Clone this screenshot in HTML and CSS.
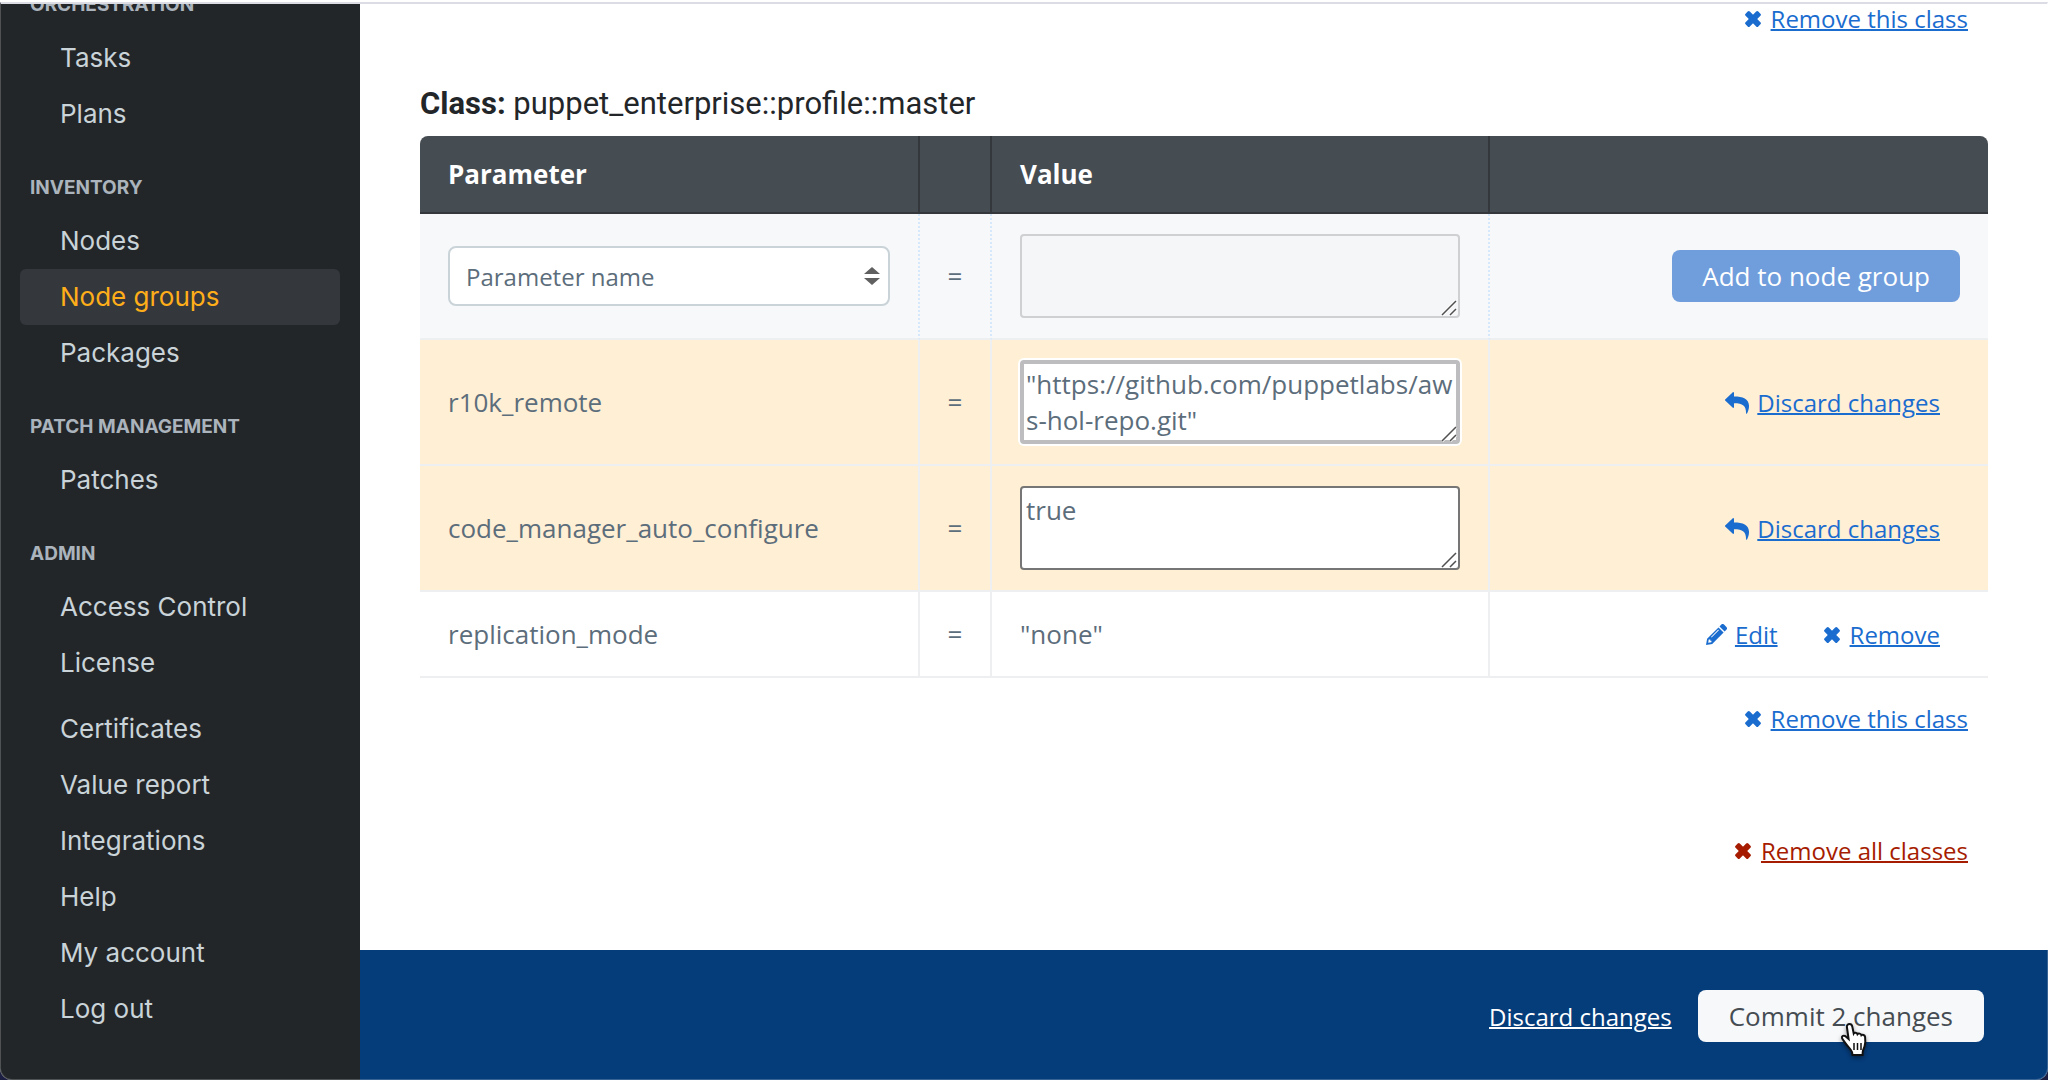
FILE: index.html
```html
<!DOCTYPE html>
<html lang="en">
<head>
<meta charset="utf-8">
<title>Node groups</title>
<link rel="stylesheet" href="styles.css">
</head>
<body>
<svg class="sprite" aria-hidden="true">
  <symbol id="i-times" viewBox="0 0 16 16"><rect x="-1" y="5" width="18" height="6" rx="1.500" transform="rotate(45 8 8)"/><rect x="-1" y="5" width="18" height="6" rx="1.500" transform="rotate(-45 8 8)"/></symbol>
  <symbol id="i-reply" viewBox="0 0 24 22"><path d="M.4 7.200 7.600.4C8.200-.2 9 .2 9 1v3.600c9 0 14.600 2.400 15 9 .1 3-.9 5.800-2 7.800-.3.5-.9.4-.9-.2C21 13.600 18 11.200 9 11.200V15c0 .8-.8 1.200-1.400.6L.4 8.800a1.100 1.100 0 0 1 0-1.600z"/></symbol>
  <symbol id="i-pencil" viewBox="0 0 21 21"><path fill-rule="evenodd" d="M12.500 3.400 17.600 8.500 6.200 19.900 0 21 1.100 14.800zM2.700 15.600l-.5 3.200 3.200-.5.100-1.600H4.300v-1.200zM12.300 5.600 5 12.900l.6.6 7.300-7.300zM13.500 2.400 15.300.6a1.900 1.900 0 0 1 2.700 0l2.400 2.400a1.900 1.900 0 0 1 0 2.700l-1.800 1.800z"/></symbol>
  <symbol id="i-grip" viewBox="0 0 16 16"><path d="M1 15 15 1M9 15l6-6" fill="none" stroke="#fff" stroke-width="3"/><path d="M1 15 15 1M9 15l6-6" fill="none" stroke="#505050" stroke-width="1.500"/></symbol>
</svg>
<div class="window">
  <nav class="sidebar">
    <h2>Orchestration</h2>
    <ul>
      <li><a href="#">Tasks</a></li>
      <li><a href="#">Plans</a></li>
    </ul>
    <h2>Inventory</h2>
    <ul>
      <li><a href="#">Nodes</a></li>
      <li><a href="#" class="active" aria-current="page">Node groups</a></li>
      <li><a href="#">Packages</a></li>
    </ul>
    <h2>Patch management</h2>
    <ul>
      <li><a href="#">Patches</a></li>
    </ul>
    <h2>Admin</h2>
    <ul>
      <li><a href="#">Access Control</a></li>
      <li><a href="#">License</a></li>
    </ul>
    <ul class="secondary">
      <li><a href="#">Certificates</a></li>
      <li><a href="#">Value report</a></li>
      <li><a href="#">Integrations</a></li>
      <li><a href="#">Help</a></li>
      <li><a href="#">My account</a></li>
      <li><a href="#">Log out</a></li>
    </ul>
  </nav>
  <div class="content">
    <main>
      <p class="class-action"><a class="action" href="#"><svg class="times"><use href="#i-times"/></svg><span>Remove this class</span></a></p>
      <h1><strong>Class:</strong> puppet_enterprise::profile::master</h1>
      <table>
        <colgroup><col class="c-name"><col class="c-eq"><col class="c-value"><col></colgroup>
        <thead>
          <tr><th scope="col">Parameter</th><th></th><th scope="col">Value</th><th></th></tr>
        </thead>
        <tbody>
          <tr class="new">
            <td><div class="select"><select aria-label="Parameter name"><option>Parameter name</option></select><svg viewBox="0 0 16 18"><path d="M8 0 16 7H0zM0 11h16l-8 7z"/></svg></div></td>
            <td class="eq">=</td>
            <td><div class="value"><textarea aria-label="New value" disabled></textarea><svg><use href="#i-grip"/></svg></div></td>
            <td class="actions"><button type="button" class="btn primary" disabled>Add to node group</button></td>
          </tr>
          <tr class="changed">
            <td>r10k_remote</td>
            <td class="eq">=</td>
            <td><div class="value"><textarea class="focused" aria-label="r10k_remote">"https://github.com/puppetlabs/aws-hol-repo.git"</textarea><svg><use href="#i-grip"/></svg></div></td>
            <td class="actions"><a class="action" href="#"><svg class="reply"><use href="#i-reply"/></svg><span>Discard changes</span></a></td>
          </tr>
          <tr class="changed">
            <td>code_manager_auto_configure</td>
            <td class="eq">=</td>
            <td><div class="value"><textarea aria-label="code_manager_auto_configure">true</textarea><svg><use href="#i-grip"/></svg></div></td>
            <td class="actions"><a class="action" href="#"><svg class="reply"><use href="#i-reply"/></svg><span>Discard changes</span></a></td>
          </tr>
          <tr>
            <td>replication_mode</td>
            <td class="eq">=</td>
            <td>"none"</td>
            <td class="actions"><a class="action" href="#"><svg class="pencil"><use href="#i-pencil"/></svg><span>Edit</span></a><a class="action" href="#"><svg class="times"><use href="#i-times"/></svg><span>Remove</span></a></td>
          </tr>
        </tbody>
      </table>
      <p class="class-action below"><a class="action" href="#"><svg class="times"><use href="#i-times"/></svg><span>Remove this class</span></a></p>
      <p class="class-action all"><a class="action danger" href="#"><svg class="times"><use href="#i-times"/></svg><span>Remove all classes</span></a></p>
    </main>
    <footer>
      <a href="#">Discard changes</a>
      <button type="button" class="btn commit">Commit 2 changes
        <svg class="cursor" viewBox="0 0 30 36"><path d="M9.500 2c1.700 0 2.500 1 2.800 2.600l1.400 6.900c.6-1 3.300-1 3.800.7.900-1.100 3.400-.8 3.900 1 1.200-.9 3.400-.3 3.700 1.800.4 3.400.6 6.400-.6 9.600-.8 2-1.600 3-1.800 5.400l-.1 3H12.500l-.5-3c-1-3-4.600-5.700-7-9.400-1.200-1.800-2.600-3.200-3-4.600-.5-1.900 1.700-3 3.500-1.800L8.600 17 6.900 5c-.2-1.700.9-3 2.600-3z" fill="#fff" stroke="#111" stroke-width="2"/><path d="M14 21v7M17.500 21v7M21 21v7" stroke="#111" stroke-width="1.500"/></svg>
      </button>
    </footer>
  </div>
</div>
</body>
</html>
```

FILE: styles.css
```css
* { box-sizing: border-box; }

html { background: #1c1e42; }

body {
  margin: 0;
  font-family: "Open Sans", sans-serif;
  font-size: 26px;
  line-height: 36px;
  color: #5c6d7b;
}

.sprite { display: none; }

.window {
  display: flex;
  min-height: 100vh;
  border-top: 2px solid #fff;
  border-radius: 0 0 12px 12px;
  background: #fff;
  overflow: hidden;
  position: relative;
}

/* hairline of the browser window, drawn over its contents */
.window::after {
  content: "";
  position: absolute;
  inset: 0;
  border: 1px solid rgba(255, 255, 255, 0.2);
  border-top: 2px solid #dcdce4;
  border-radius: 0 0 12px 12px;
  pointer-events: none;
}

.sidebar {
  flex: none;
  width: 360px;
  padding: 0 20px;
  background: #232629;
  font-family: Inter, sans-serif;
}

.sidebar h2 {
  display: flex;
  align-items: center;
  height: 71px;
  margin: 0;
  padding: 20px 10px 0;
  font-size: 19px;
  line-height: 24px;
  font-weight: 700;
  text-transform: uppercase;
  color: #abb4bc;
}

.sidebar h2:first-child { margin-top: -43px; }

.sidebar ul {
  margin: 0;
  padding: 0;
  list-style: none;
}

.sidebar .secondary { margin-top: 10px; }

.sidebar li a {
  display: block;
  height: 56px;
  padding: 0 40px;
  border-radius: 6px;
  font-size: 26px;
  line-height: 56px;
  color: #c9d3d8;
  text-decoration: none;
}

.sidebar li a.active {
  background: #34383c;
  color: #ffae1a;
}

.content {
  flex: 1;
  display: flex;
  flex-direction: column;
}

main {
  flex: 1;
  padding: 0 60px;
}

.class-action {
  display: flex;
  justify-content: flex-end;
  margin: 0;
  padding-right: 20px;
}

.class-action.below { margin-top: 24px; }
.class-action.all { margin-top: 96px; }

h1 {
  margin: 48px 0 14px;
  font-family: Roboto, sans-serif;
  font-size: 31px;
  line-height: 36px;
  font-weight: 400;
  color: #232629;
}

table {
  width: 100%;
  table-layout: fixed;
  border-collapse: separate;
  border-spacing: 0;
}

.c-name { width: 500px; }
.c-eq { width: 72px; }
.c-value { width: 498px; }

th {
  height: 78px;
  padding: 0 28px;
  border-right: 2px solid #34383c;
  border-bottom: 2px solid #34383c;
  background: #454c52;
  color: #fff;
  font-weight: 700;
  text-align: left;
}

th:first-child { border-top-left-radius: 8px; }
th:last-child { border-top-right-radius: 8px; }

td {
  height: 86px;
  padding: 20px 28px;
  border-right: 2px solid #eeeff1;
  border-bottom: 2px solid #eeeff1;
}

th:last-child,
td:last-child { border-right: 0; }

.new td {
  background: #f7f8fa;
  border-right-style: dotted;
  border-right-color: #d6e8fb;
}

.changed td { background: #ffefd5; }

td.eq {
  padding: 0;
  text-align: center;
}

td.actions {
  text-align: right;
}

.select,
.value {
  position: relative;
}

.select svg {
  position: absolute;
  top: 21px;
  right: 10px;
  width: 16px;
  height: 18px;
  fill: #606060;
  pointer-events: none;
}

/* resize grip in the corner of a value box */
.value svg {
  position: absolute;
  right: 3px;
  bottom: 2px;
  width: 16px;
  height: 16px;
  pointer-events: none;
}

select {
  display: block;
  appearance: none;
  width: 100%;
  height: 60px;
  padding: 2px 16px 0;
  border: 2px solid #c9d3d8;
  border-radius: 8px;
  background: #fff;
  color: #5c6d7b;
  font: 24px/36px "Open Sans", sans-serif;
}

textarea {
  display: block;
  width: 100%;
  height: 84px;
  padding: 4px;
  border: 2px solid #767676;
  border-radius: 4px;
  background: #fff;
  color: #5c6d7b;
  font: 26px/36px "Open Sans", sans-serif;
  word-break: break-all;
  overflow: hidden;
  resize: none;
}

textarea:disabled {
  border-color: #cfd0d1;
  background: #f5f6f8;
}

textarea.focused {
  padding: 2px;
  border: 4px solid #bdbdbf;
  box-shadow: 0 0 0 2px #fff;
}

.btn {
  height: 52px;
  padding: 0 30px;
  border: 0;
  border-radius: 8px;
  font: 26px/36px "Open Sans", sans-serif;
}

.btn.primary {
  background: #709ddc;
  color: #fff;
  vertical-align: middle;
}

.btn.commit {
  position: relative;
  padding: 0 31px;
  background: #f7f8fa;
  color: #454c52;
}

.cursor {
  position: absolute;
  left: 142px;
  top: 32px;
  width: 30px;
  height: 36px;
  filter: drop-shadow(0 2px 2px rgba(0, 0, 0, 0.4));
}

.action {
  display: inline-flex;
  align-items: center;
  gap: 10px;
  padding-bottom: 2px;
  color: #1a6ccf;
  fill: currentColor;
  font-size: 24px;
  line-height: 34px;
  text-decoration: none;
}

.action span {
  text-decoration: underline;
  text-decoration-thickness: 2px;
}

td .action {
  margin: 0 20px 0 26px;
  vertical-align: middle;
}

.danger { color: #a61c00; }

.times { width: 16px; height: 16px; }
.reply { width: 24px; height: 22px; margin-right: -2px; }
.pencil { width: 21px; height: 21px; margin-right: -2px; }

footer {
  display: flex;
  justify-content: flex-end;
  align-items: center;
  gap: 26px;
  height: 130px;
  padding: 2px 64px 0;
  background: #053c7a;
}

footer a {
  padding-top: 2px;
  color: #fff;
  font-size: 24px;
  text-decoration-thickness: 2px;
}
```
